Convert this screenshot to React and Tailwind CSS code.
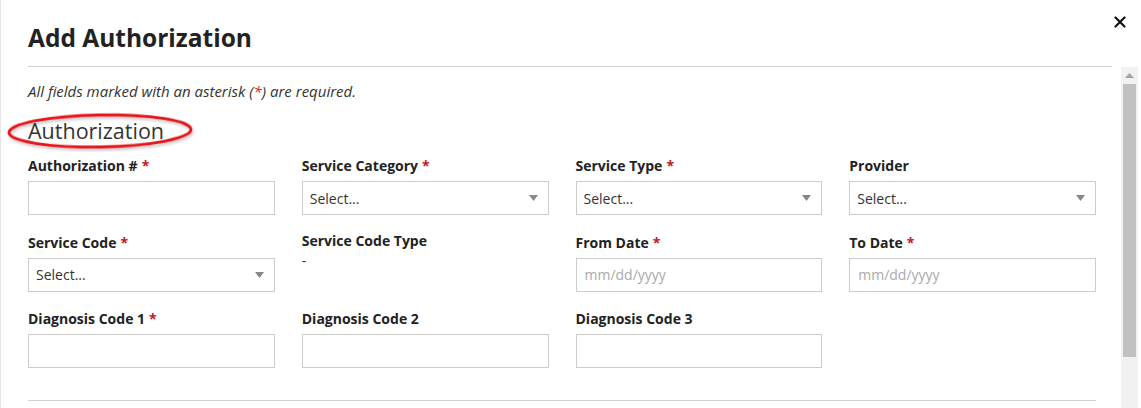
import React from "react";

const font = { fontFamily: '"Open Sans", "Noto Sans", sans-serif' };

function Label({ text, required }) {
  return (
    <div className="h-[20px] text-[14px] leading-[20px] font-bold text-[#222] mb-[5px]">
      {text}
      {required && <span className="text-[#c4161c] ml-[4px]">*</span>}
    </div>
  );
}

function TextBox({ placeholder }) {
  return (
    <div className="h-[34px] border border-[#cccccc] bg-white px-[8px] flex items-center text-[14px] text-[#aaaaaa]">
      {placeholder}
    </div>
  );
}

function SelectBox() {
  return (
    <div className="h-[34px] border border-[#cccccc] bg-white pl-[7px] pr-[10px] flex items-center justify-between text-[14px] text-[#333]">
      <span>Select...</span>
      <svg width="9" height="6" viewBox="0 0 9 6">
        <path d="M0 0 L9 0 L4.5 6 Z" fill="#888" />
      </svg>
    </div>
  );
}

function Field({ label, required, children }) {
  return (
    <div className="flex flex-col">
      <Label text={label} required={required} />
      {children}
    </div>
  );
}

export default function App() {
  return (
    <div className="w-[1141px] h-[408px] bg-white relative overflow-hidden border-l border-[#e6e6e6]" style={font}>
      {/* close */}
      <button className="absolute top-[15px] right-[14px] w-[14px] h-[14px] flex items-center justify-center">
        <svg width="12" height="12" viewBox="0 0 12 12">
          <path d="M1.5 1.5 L10.5 10.5 M10.5 1.5 L1.5 10.5" stroke="#111" strokeWidth="2.2" strokeLinecap="round" />
        </svg>
      </button>

      {/* header */}
      <div className="ml-[27px] mr-[29px] pt-[21px] pb-[11px] border-b border-[#cfcfcf]">
        <h1 className="text-[24.5px] leading-[34px] font-bold text-[#222]">Add Authorization</h1>
      </div>

      {/* body */}
      <div className="flex h-[341px]">
        <div className="flex-1 pl-[27px] pr-[25px] pt-[14px]">
          <p className="text-[15px] leading-[20px] italic text-[#333]">
            All fields marked with an asterisk (<span className="text-[#c4161c]">*</span>) are required.
          </p>

          <div className="relative mt-[16px] mb-[11px] w-fit">
            <h2 className="text-[21.5px] leading-[28px] font-normal text-[#333]">Authorization</h2>
            <svg className="absolute left-[-22px] top-[-5px]" width="190" height="40" viewBox="0 0 190 40">
              <defs>
                <filter id="sh" x="-10%" y="-30%" width="120%" height="160%">
                  <feDropShadow dx="1" dy="2" stdDeviation="1.5" floodColor="#000" floodOpacity="0.25" />
                </filter>
              </defs>
              <ellipse cx="94" cy="19" rx="91" ry="16" fill="none" stroke="#e3161b" strokeWidth="2.8" filter="url(#sh)" transform="rotate(-1 94 19)" />
            </svg>
          </div>

          <div className="grid grid-cols-4 gap-x-[27px] gap-y-[17.6px] w-[1068px]">
            <Field label="Authorization #" required>
              <TextBox />
            </Field>
            <Field label="Service Category" required>
              <SelectBox />
            </Field>
            <Field label="Service Type" required>
              <SelectBox />
            </Field>
            <Field label="Provider">
              <SelectBox />
            </Field>

            <Field label="Service Code" required>
              <SelectBox />
            </Field>
            <div className="flex flex-col">
              <div className="h-[20px] text-[14px] leading-[20px] font-bold text-[#222] -mt-[2px]">Service Code Type</div>
              <div className="text-[14px] leading-[20px] text-[#333]">-</div>
            </div>
            <Field label="From Date" required>
              <TextBox placeholder="mm/dd/yyyy" />
            </Field>
            <Field label="To Date" required>
              <TextBox placeholder="mm/dd/yyyy" />
            </Field>

            <Field label="Diagnosis Code 1" required>
              <TextBox />
            </Field>
            <Field label="Diagnosis Code 2">
              <TextBox />
            </Field>
            <Field label="Diagnosis Code 3">
              <TextBox />
            </Field>
            <div />
          </div>

          <div className="mt-[32px] border-t border-[#cfcfcf]" />
        </div>

        {/* scrollbar */}
        <div className="w-[17px] mr-[3px] bg-[#f1f1f1] flex flex-col items-center">
          <div className="h-[17px] flex items-center justify-center">
            <svg width="9" height="5" viewBox="0 0 9 5">
              <path d="M0 5 L9 5 L4.5 0 Z" fill="#a3a3a3" />
            </svg>
          </div>
          <div className="w-[13px] h-[273px] bg-[#c1c1c1]" />
        </div>
      </div>
    </div>
  );
}
